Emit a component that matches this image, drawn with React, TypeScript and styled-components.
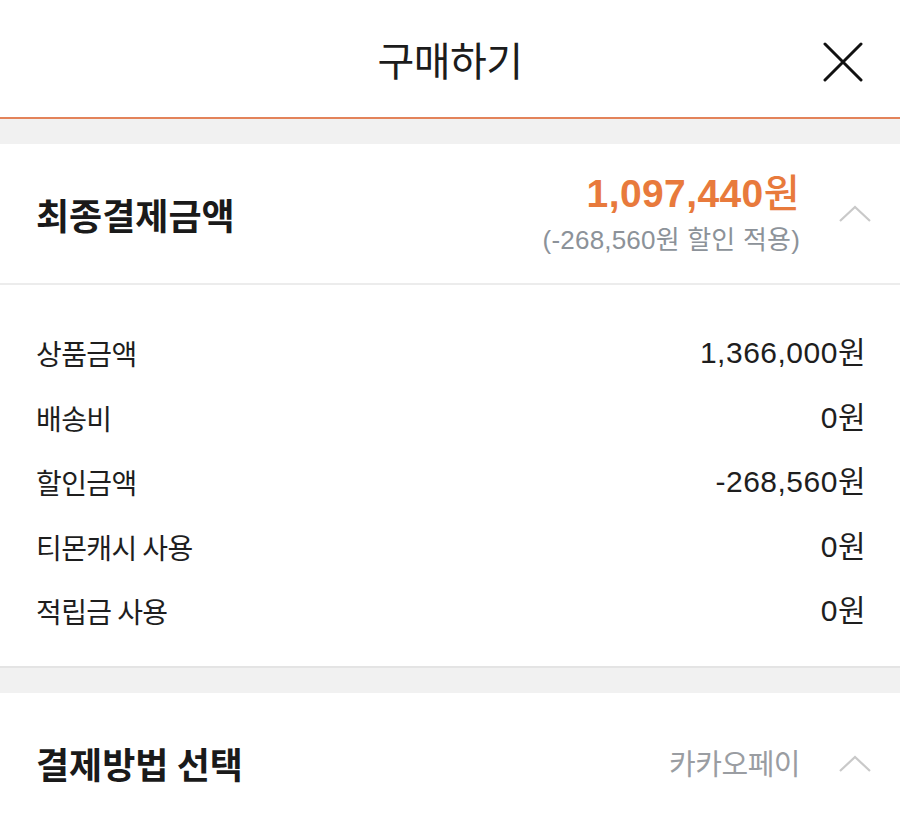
import React from "react";
import styled, { createGlobalStyle } from "styled-components";

const Global = createGlobalStyle`
  html, body { margin: 0; padding: 0; background: #ffffff; }
  body { font-family: "Noto Sans CJK KR", "Noto Sans", sans-serif; color: #1a1a1a; }
  * { box-sizing: border-box; }
`;

const Page = styled.div`
  width: 900px;
  min-height: 823px;
  background: #ffffff;
  display: flex;
  flex-direction: column;
`;

const Header = styled.header`
  height: 119px;
  border-bottom: 2px solid #e3835a;
  display: grid;
  grid-template-columns: 1fr auto 1fr;
  align-items: center;
  padding: 0 36px 0;
`;

const HeaderTitle = styled.h1`
  grid-column: 2;
  margin: 0;
  font-size: 40px;
  font-weight: 400;
  letter-spacing: -0.5px;
  color: #1c1c1c;
  line-height: 1;
`;

const CloseButton = styled.button`
  grid-column: 3;
  justify-self: end;
  border: none;
  background: none;
  padding: 0;
  width: 40px;
  height: 40px;
  display: flex;
  align-items: center;
  justify-content: center;
  margin-right: 1px;
  margin-top: 6px;
`;

const Spacer = styled.div<{ $h: number }>`
  height: ${(p) => p.$h}px;
  background: #f1f1f1;
`;

const Section = styled.section<{ $borderBottom?: boolean }>`
  background: #ffffff;
  border-bottom: ${(p) => (p.$borderBottom ? "2px solid #e4e4e4" : "none")};
`;

const SummaryHead = styled.div`
  height: 141px;
  display: flex;
  align-items: center;
  justify-content: space-between;
  padding: 0 28px 0 36px;
  border-bottom: 2px solid #ececec;
`;

const SectionTitle = styled.h2`
  margin: 0;
  font-size: 36px;
  font-weight: 700;
  letter-spacing: 0px;
  color: #1a1a1a;
  line-height: 1;
`;

const RightGroup = styled.div`
  display: flex;
  align-items: center;
  gap: 38px;
`;

const AmountBlock = styled.div`
  display: flex;
  flex-direction: column;
  align-items: flex-end;
  gap: 10px;
  margin-top: -4px;
`;

const Total = styled.div`
  font-family: "Liberation Sans", "Noto Sans CJK KR", sans-serif;
  font-size: 39px;
  font-weight: 700;
  color: #e87a3c;
  line-height: 1.1;
  letter-spacing: 0.4px;
`;

const Won = styled.span`
  font-family: "Noto Sans CJK KR", sans-serif;
  font-weight: 500;
`;

const SubNote = styled.div`
  font-family: "Liberation Sans", "Noto Sans CJK KR", sans-serif;
  font-size: 26px;
  color: #8c9299;
  line-height: 1.1;
  letter-spacing: 0.2px;
`;

const Chevron = styled.svg`
  width: 34px;
  height: 22px;
  flex: none;
`;

const Rows = styled.div`
  padding: 36px 36px 22px;
  display: flex;
  flex-direction: column;
`;

const Row = styled.div`
  height: 64.5px;
  display: flex;
  align-items: center;
  justify-content: space-between;
`;

const Label = styled.span`
  font-size: 28px;
  letter-spacing: -0.6px;
  color: #1e1e1e;
  line-height: 1;
`;

const Value = styled.span`
  font-family: "Liberation Sans", "Noto Sans CJK KR", sans-serif;
  font-size: 30px;
  letter-spacing: 0.5px;
  color: #1e1e1e;
  line-height: 1;
  margin-right: -2px;
`;

const PayHead = styled.div`
  height: 140px;
  display: flex;
  align-items: center;
  justify-content: space-between;
  padding: 0 28px 0 36px;
`;

const PayValue = styled.span`
  font-size: 29px;
  color: #9a9da2;
  letter-spacing: -0.5px;
  line-height: 1;
`;

const UpChevron = () => (
  <Chevron viewBox="0 0 34 22">
    <polyline points="2,19 17,5 32,19" fill="none" stroke="#c9c9c9" strokeWidth="2.2" />
  </Chevron>
);

const rows = [
  { label: "상품금액", value: "1,366,000" },
  { label: "배송비", value: "0" },
  { label: "할인금액", value: "-268,560" },
  { label: "티몬캐시 사용", value: "0" },
  { label: "적립금 사용", value: "0" },
];

export default function App() {
  return (
    <>
      <Global />
      <Page>
        <Header>
          <HeaderTitle>구매하기</HeaderTitle>
          <CloseButton aria-label="닫기">
            <svg width="40" height="40" viewBox="0 0 40 40">
              <path d="M2 2 L38 38 M38 2 L2 38" stroke="#111" strokeWidth="3" strokeLinecap="round" />
            </svg>
          </CloseButton>
        </Header>
        <Spacer $h={25} />
        <Section $borderBottom>
          <SummaryHead>
            <SectionTitle>최종결제금액</SectionTitle>
            <RightGroup>
              <AmountBlock>
                <Total>
                  1,097,440<Won>원</Won>
                </Total>
                <SubNote>(-268,560원 할인 적용)</SubNote>
              </AmountBlock>
              <UpChevron />
            </RightGroup>
          </SummaryHead>
          <Rows>
            {rows.map((r) => (
              <Row key={r.label}>
                <Label>{r.label}</Label>
                <Value>{r.value}원</Value>
              </Row>
            ))}
          </Rows>
        </Section>
        <Spacer $h={25} />
        <Section>
          <PayHead>
            <SectionTitle>결제방법 선택</SectionTitle>
            <RightGroup>
              <PayValue>카카오페이</PayValue>
              <UpChevron />
            </RightGroup>
          </PayHead>
        </Section>
      </Page>
    </>
  );
}
